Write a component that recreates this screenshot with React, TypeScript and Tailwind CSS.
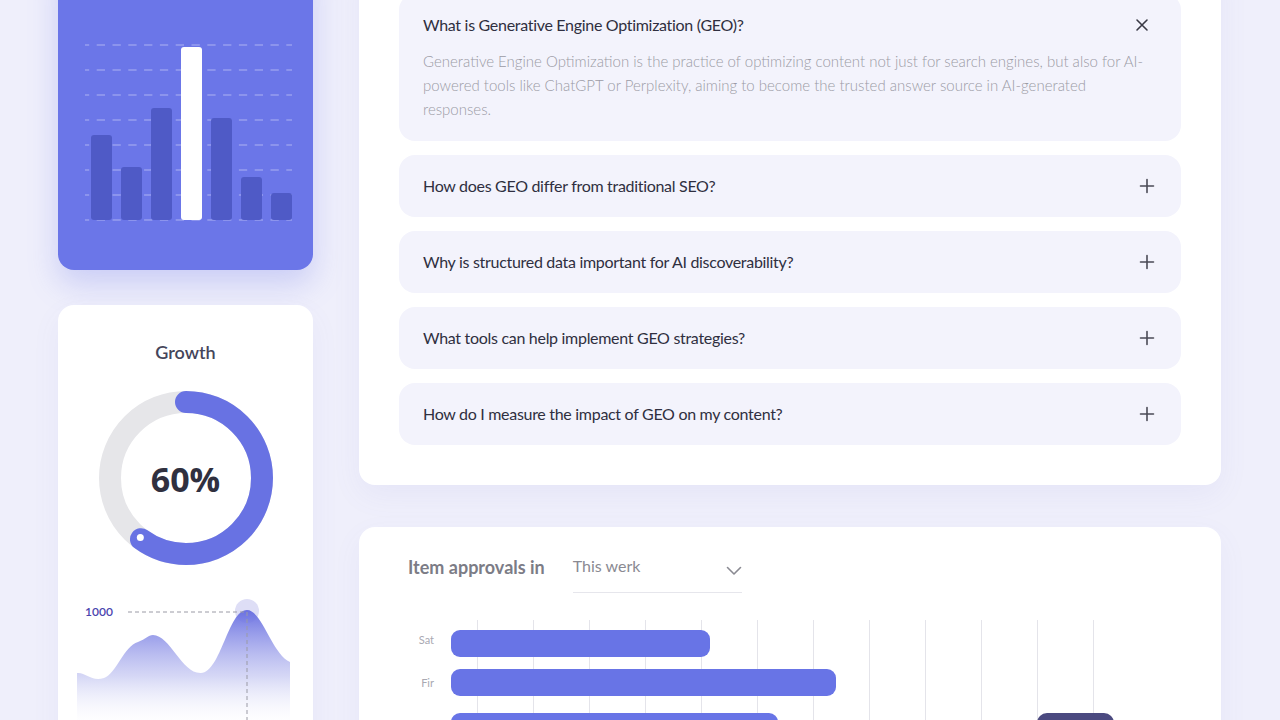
import React from "react";

const faqs = [
  "How does GEO differ from traditional SEO?",
  "Why is structured data important for AI discoverability?",
  "What tools can help implement GEO strategies?",
  "How do I measure the impact of GEO on my content?",
];

function PlusIcon() {
  return (
    <svg width="20" height="20" viewBox="0 0 20 20" className="shrink-0">
      <path d="M10 3.5V16.5M3.5 10H16.5" stroke="#4a4a55" strokeWidth="1.6" strokeLinecap="round" />
    </svg>
  );
}

function XIcon() {
  return (
    <svg width="20" height="20" viewBox="0 0 20 20" className="shrink-0 mr-[5px]">
      <path d="M5 5L15 15M15 5L5 15" stroke="#3a3a45" strokeWidth="1.6" strokeLinecap="round" />
    </svg>
  );
}

function BarCardChart() {
  const tops = [92, 124, 65, 4, 75, 134, 150];
  const lines = [2, 27, 52, 77, 102, 127, 152, 177];
  return (
    <svg width="207" height="180" viewBox="0 0 207 180">
      {lines.map((y) => (
        <line
          key={y}
          x1="0"
          x2="207"
          y1={y}
          y2={y}
          stroke="rgba(255,255,255,0.45)"
          strokeWidth="1"
          strokeDasharray="8.3 7.5"
          strokeDashoffset="4.1"
        />
      ))}
      {tops.map((t, i) => (
        <rect
          key={i}
          x={6 + i * 30}
          y={t}
          width="21"
          height={177 - t}
          rx="3"
          fill={i === 3 ? "#ffffff" : "#4f5ac6"}
        />
      ))}
    </svg>
  );
}

function Donut() {
  const r = 76;
  const c = 2 * Math.PI * r;
  const len = c * 0.6;
  const a = (216 * Math.PI) / 180;
  const dx = 90 + r * Math.sin(a);
  const dy = 90 - r * Math.cos(a);
  return (
    <div className="relative w-[180px] h-[180px]">
      <svg width="180" height="180" viewBox="0 0 180 180">
        <circle cx="90" cy="90" r={r} fill="none" stroke="#e6e6e9" strokeWidth="22" />
        <circle
          cx="90"
          cy="90"
          r={r}
          fill="none"
          stroke="#6872e3"
          strokeWidth="22"
          strokeLinecap="round"
          strokeDasharray={`${len} ${c}`}
          transform="rotate(-90 90 90)"
        />
        <circle cx={dx - 1} cy={dy - 2} r="3.5" fill="#ffffff" />
      </svg>
      <div className="absolute inset-0 flex items-center justify-center pt-[2px]">
        <span className="font-['Open_Sans',sans-serif] text-[34px] font-bold text-[#30303f] leading-none">60%</span>
      </div>
    </div>
  );
}

function AreaChart() {
  return (
    <svg width="255" height="140" viewBox="0 0 255 140">
      <defs>
        <linearGradient id="areaG" x1="0" y1="0" x2="0" y2="1">
          <stop offset="0" stopColor="#646be0" stopOpacity="0.95" />
          <stop offset="0.55" stopColor="#b9bcef" stopOpacity="0.6" />
          <stop offset="1" stopColor="#ffffff" stopOpacity="0" />
        </linearGradient>
      </defs>
      <circle cx="189" cy="21" r="12" fill="#dedef6" />
      <path
        d="M19,83 C28,82 33,92 46,88 C58,84 66,56 80,52 C88,49 90,45 95,45 C112,45 124,84 143,83 C163,82 170,20 189,20 C204,20 214,64 232,72 L232,140 L19,140 Z"
        fill="url(#areaG)"
      />
      <line x1="70" x2="189" y1="22" y2="22" stroke="#9a9aa5" strokeWidth="1" strokeDasharray="4 3" />
      <line x1="189" x2="189" y1="22" y2="140" stroke="#9a9aa5" strokeWidth="1" strokeDasharray="4 3" />
      <text x="27" y="26" fontSize="12" fontWeight="600" fill="#4b45ae" fontFamily="Lato, sans-serif">
        1000
      </text>
    </svg>
  );
}

export default function App() {
  const gridLines = Array.from({ length: 12 }, (_, i) => i);
  return (
    <div className="h-screen overflow-hidden bg-[#efeffb] font-['Lato','Noto_Sans',sans-serif]">
      <div className="w-[1163px] ml-[58px] flex items-start gap-[46px] -mt-[46px]">
        {/* Left column */}
        <div className="w-[255px] flex flex-col gap-[35px] shrink-0">
          <div className="h-[316px] rounded-2xl bg-[#6b76e8] shadow-[0_14px_30px_rgba(106,118,232,0.28)] flex flex-col justify-end pl-[27px] pb-[47px]">
            <BarCardChart />
          </div>
          <div className="h-[500px] rounded-2xl bg-white shadow-[0_10px_30px_rgba(110,110,200,0.06)] flex flex-col items-center pt-[33px]">
            <div className="text-[18px] leading-[28px] font-semibold text-[#45455a]">Growth</div>
            <div className="mt-[22px]">
              <Donut />
            </div>
            <div className="mt-[22px] self-stretch">
              <AreaChart />
            </div>
          </div>
        </div>

        {/* Right column */}
        <div className="w-[862px] flex flex-col gap-[42px] shrink-0">
          <div className="rounded-2xl bg-white shadow-[0_10px_30px_rgba(110,110,200,0.07)] p-[40px] flex flex-col gap-[14px]">
            <div className="rounded-2xl bg-[#f3f3fc] px-6 pt-5 pb-5">
              <div className="flex items-center justify-between h-[22px]">
                <span className="text-[16px] tracking-[-0.3px] text-[#2f2f40]">What is Generative Engine Optimization (GEO)?</span>
                <XIcon />
              </div>
              <p className="mt-[13px] text-[15px] leading-[24px] text-[#9b9ba5] font-light">
                Generative Engine Optimization is the practice of optimizing content not just for search engines, but also for AI-powered tools like ChatGPT or Perplexity, aiming to become the trusted answer source in AI-generated responses.
              </p>
            </div>
            {faqs.map((q) => (
              <div key={q} className="rounded-2xl bg-[#f3f3fc] px-6 py-5 flex items-center justify-between">
                <span className="text-[16px] leading-[22px] tracking-[-0.3px] text-[#2f2f40]">{q}</span>
                <PlusIcon />
              </div>
            ))}
          </div>

          <div className="h-[400px] rounded-2xl bg-white shadow-[0_10px_30px_rgba(110,110,200,0.06)] pl-[49px] pt-[28px]">
            <div className="flex items-start">
              <span className="text-[18px] leading-[24px] font-bold text-[#7c7c86]">Item approvals in</span>
              <div className="ml-[28px] -mt-px w-[169px] border-b border-[#e6e6ec] pb-[14px] flex items-center justify-between">
                <span className="text-[16px] leading-[24px] text-[#8a8a92]">This werk</span>
                <svg width="16" height="10" viewBox="0 0 16 10" className="mt-[10px]">
                  <path d="M1.5 1.5L8 8L14.5 1.5" fill="none" stroke="#8a8a92" strokeWidth="1.6" strokeLinecap="round" strokeLinejoin="round" />
                </svg>
              </div>
            </div>

            <div className="relative mt-[27px] h-[300px]">
              <div className="absolute top-0 bottom-0 left-[69px] flex gap-[55px]">
                {gridLines.map((i) => (
                  <div key={i} className="w-px h-full bg-[#e4e4ea]" />
                ))}
              </div>
              <div className="relative flex flex-col pt-[10px]">
                <div className="flex items-center h-[27px]">
                  <span className="w-[26px] text-right text-[11px] leading-[14px] text-[#a9a9b2] -mt-[8px]">Sat</span>
                  <div className="ml-[17px] h-[27px] w-[259px] rounded-[9px] bg-[#6874e6]" />
                </div>
                <div className="flex items-center h-[27px] mt-[12px]">
                  <span className="w-[26px] text-right text-[11px] leading-[14px] text-[#a9a9b2]">Fir</span>
                  <div className="ml-[17px] h-[27px] w-[385px] rounded-[9px] bg-[#6874e6]" />
                </div>
                <div className="flex items-center h-[27px] mt-[17px]">
                  <span className="w-[26px]" />
                  <div className="ml-[17px] h-[27px] w-[327px] rounded-[9px] bg-[#6874e6]" />
                </div>
              </div>
              <div className="absolute left-[629px] top-[93px] w-[77px] h-[40px] rounded-[10px] bg-[#4b4a80]" />
            </div>
          </div>
        </div>
      </div>
    </div>
  );
}
